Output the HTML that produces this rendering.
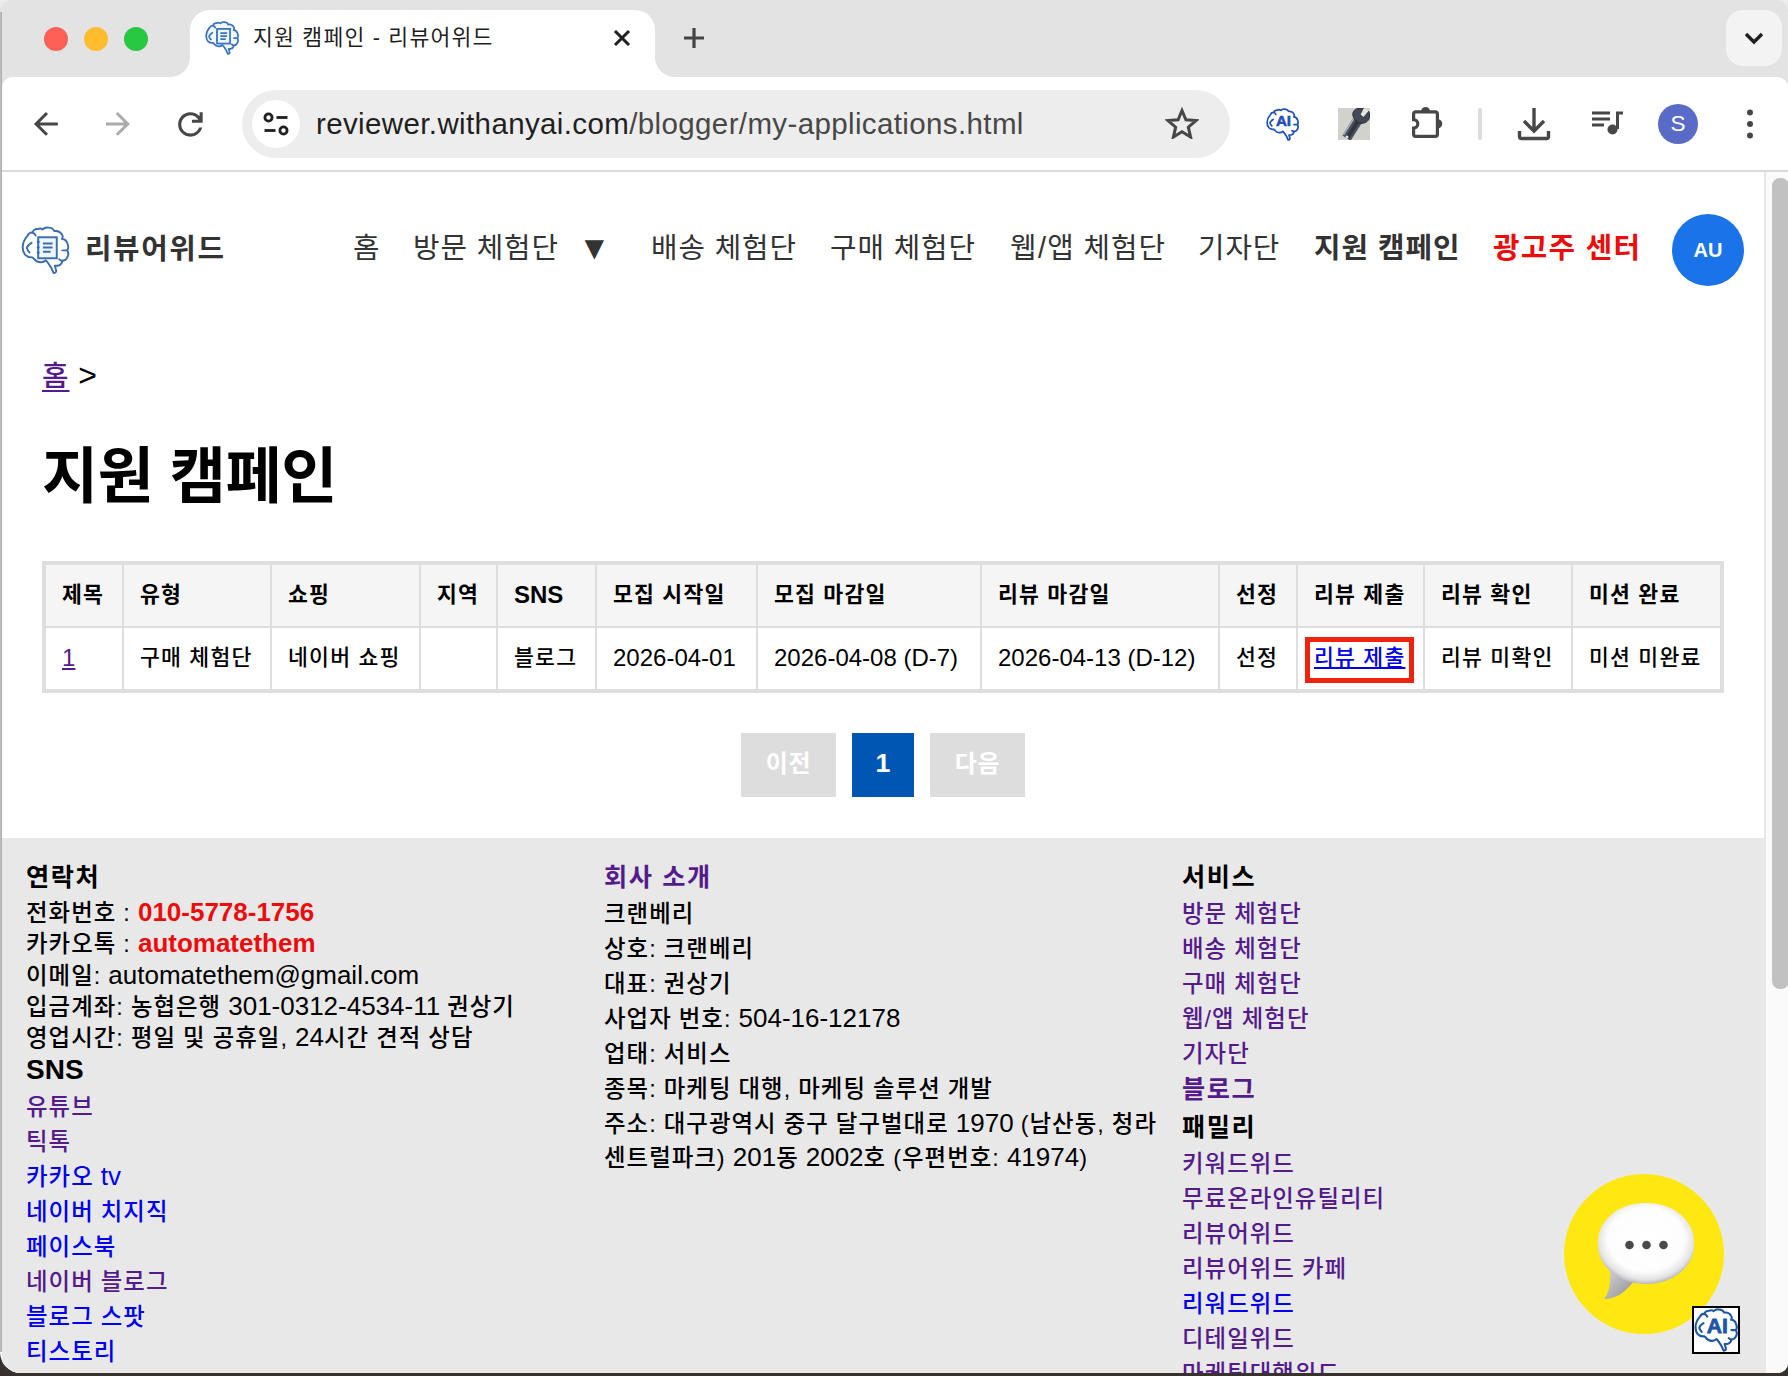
<!DOCTYPE html>
<html lang="ko">
<head>
<meta charset="utf-8">
<title>지원 캠페인 - 리뷰어위드</title>
<style>
*{box-sizing:border-box}
html,body{margin:0;padding:0}
body{width:1788px;height:1376px;overflow:hidden;background:#b2b2b2;position:relative;
 font-family:"Liberation Sans","Noto Sans CJK KR",sans-serif;color:#000}
a{text-decoration:none}
#win{position:absolute;left:0;top:0;width:1788px;height:1373px;background:#fff;overflow:hidden;
 border-radius:11px 11px 10px 21px}
/* ---------- browser chrome ---------- */
#tabbar{position:absolute;left:0;top:0;width:1788px;height:100px;background:#e3e3e3}
.tl{position:absolute;top:27px;width:24px;height:24px;border-radius:50%}
#tab{position:absolute;left:190px;top:10px;width:465px;height:67px;background:#fff;border-radius:20px 20px 0 0}
#tab:before,#tab:after{content:"";position:absolute;bottom:0;width:20px;height:20px}
#tab:before{left:-20px;background:radial-gradient(circle at 0 0,rgba(255,255,255,0) 19.5px,#fff 20.5px)}
#tab:after{right:-20px;background:radial-gradient(circle at 100% 0,rgba(255,255,255,0) 19.5px,#fff 20.5px)}
#tabtitle{position:absolute;left:63px;top:12px;font-size:21.6px;line-height:32px;color:#1f1f1f;white-space:nowrap;letter-spacing:1.2px;font-weight:400}
#toolbar{position:absolute;left:2px;top:77px;width:1786px;height:93px;background:#fff;border-radius:11px 11px 0 0}
#edge{position:absolute;left:0;top:12px;width:2px;height:1340px;background:linear-gradient(90deg,#c6c6c6,#a4a4a4)}
#tbline{position:absolute;left:0;top:170px;width:1788px;height:2px;background:#dadada}
#url{position:absolute;left:242px;top:90px;width:988px;height:68px;border-radius:34px;background:#eeeded}
#urltext{position:absolute;left:74px;top:16px;font-size:29.5px;line-height:36px;color:#474747;white-space:nowrap;letter-spacing:.375px}
.ico{position:absolute}
/* ---------- page ---------- */
#page{position:absolute;left:2px;top:172px;width:1762px;height:1204px;background:#fff;overflow:hidden}
#sbar{position:absolute;left:1764px;top:172px;width:24px;height:1204px;background:#fafafa;border-left:2px solid #e8e8e8}
#thumb{position:absolute;left:6px;top:6px;width:17px;height:811px;border-radius:8px;background:#c1c1c1}

/* page content */
.k{font-size:.9em;letter-spacing:.033em;font-weight:500}
.k .l{font-size:1.1111em;letter-spacing:0;line-height:0}
th.k,h1 .k,#brand .k,#pager .k,#foot h3.k{font-weight:700}
#hdr{position:absolute;left:0;top:0;width:1762px;height:150px}
#logo{position:absolute;left:19.3px;top:54px;width:48.6px;height:48.6px}
#brand{position:absolute;left:83px;top:53px;letter-spacing:.6px;font-size:32px;line-height:46px;font-weight:700;color:#333;white-space:nowrap}
#nav{position:absolute;left:0;top:52px;height:46px;width:1762px;margin:0;padding:0;list-style:none;font-size:32px;line-height:46px;color:#333;white-space:nowrap}
#nav li{position:absolute;top:1px;font-size:28.8px;letter-spacing:.9px;font-weight:400}
#nav b{font-weight:700;letter-spacing:1.3px}
#au{position:absolute;left:1670px;top:42px;width:72px;height:72px;border-radius:50%;background:#1a73e8;color:#fff;font-weight:700;font-size:20px;line-height:72px;text-align:center}
#crumb{position:absolute;left:40px;top:180px;font-size:32px;line-height:46px;white-space:nowrap}
#crumb a{color:#551a8b;text-decoration:underline;text-decoration-thickness:2px;text-underline-offset:4px}
h1{position:absolute;left:40px;top:258px;margin:0;font-size:64px;line-height:92px;font-weight:700;white-space:nowrap}
table{position:absolute;left:40px;top:389px;border-collapse:separate;border-spacing:0;border:3px solid #dedede;table-layout:fixed;width:1682px;font-size:24px;line-height:29px}
th,td{border:1px solid #dedede;padding:15px 14px 17px 16px;text-align:left;white-space:nowrap;height:63px;overflow:visible;vertical-align:middle}
th{background:#f5f5f5;font-weight:700}
td{background:#fff}
th.k,td.k{letter-spacing:1.2px}
td a{color:#551a8b;text-decoration:underline}
td a.sub{color:#0000ee;position:relative}
#hl{position:absolute;left:1303px;top:465px;width:109px;height:46px;border:5px solid #f0230f}
#pager{position:absolute;left:0;top:561px;width:1762px;height:64px}
#pager button{position:absolute;top:0;height:64px;border:0;padding:0 0 4px 0;margin:0;font-family:inherit;font-size:26.67px;font-weight:700;color:#fff;background:#ddd;text-align:center;line-height:32px}
#pager button.on{background:#0056b3}
#foot{position:absolute;left:0;top:666px;width:1762px;height:540px;background:#e8e8e8;font-size:26px;line-height:31px}
#foot a{color:#551a8b}
#foot a.nv{color:#0000ee}
#foot h3{margin:0;font-size:28px;font-weight:700;position:absolute;white-space:nowrap;line-height:36px}
#foot ul{list-style:none;margin:0;padding:0;position:absolute}
#foot li{white-space:nowrap}
.c1 li{height:31.3px}
.c2 li,.c3 li,.c1s li{height:35.05px;line-height:35px}
#foot .red{color:#ec0c0c;font-weight:700}
#foot h3.k{font-size:25.2px;letter-spacing:1.6px}
#foot ul.k{letter-spacing:.045em;word-spacing:-.5px}
</style>
</head>
<body>
<div style="position:absolute;left:0;top:0;width:1788px;height:30px;background:#ececec"></div>
<div style="position:absolute;left:0;top:1340px;width:1788px;height:36px;background:#37322f"></div>
<div id="win">
 <div id="tabbar">
  <div class="tl" style="left:44px;background:#fe5f57"></div>
  <div class="tl" style="left:84px;background:#febc2e"></div>
  <div class="tl" style="left:124px;background:#28c840"></div>
  <div id="tab"><div id="tabtitle">지원 캠페인 - 리뷰어위드</div></div>
 </div>
 <div id="toolbar"></div>
 <div id="url"><div id="urltext"><span style="color:#1f1f1f">reviewer.withanyai.com</span>/blogger/my-applications.html</div></div>

 <!-- favicon -->
 <svg class="ico" style="left:205px;top:21px" width="34" height="34" viewBox="-1 -1 50 50"><path d="M.8 21.6C.5 17 3 12 5.8 8.8C7 6.5 9 5.5 10.9 5.8C11 3.5 13.5 2 16 2.2C18 1.2 20 1.5 21.5 2.5C23 .8 25.5 .4 27 .7C29.5 .5 32 1.5 33.3 4.2C36 3.8 39.5 5 41 7.5C42 9 42 11 41.2 12.4C44 12.5 46 14.5 46.8 17C47.8 19.5 47.8 22.5 46.5 24.1C47.8 26 48 29 46.5 31.5C45.5 33.5 43.5 34.8 41.4 34.8C41.2 37 39.5 39.3 36.8 39.9L33.8 39.9C34.5 42 35 44 35.3 45.5C34.8 47 33.5 47.8 32.5 47.3C31.5 44.5 30 41.5 28.5 39.5C27.3 37.5 26 35.8 24.6 34.3C23 35.8 21 36.5 19 36.3C16.5 36.3 14 35 12.9 33.3C12 32.2 11.2 31.5 10.4 31.2C8 31.5 5 30.5 3.2 28.5C1.5 26.5 .8 24 .8 21.6Z" fill="#f2f8ff" stroke="#3b74bd" stroke-width="2.6" stroke-linejoin="round"/><path d="M10.9 5.8C12 6.2 13.5 7.5 14 8.8M46.5 24.1H41.5M41.4 34.8C40 34.5 39 34 38.4 33.3M9.8 16.3Q5.5 19 5 21.5Q5.5 24 7.8 26.2" fill="none" stroke="#3b74bd" stroke-width="2.6" stroke-linecap="round"/><rect x="16.7" y="10.6" width="19.1" height="21.6" fill="#eef7ff" stroke="#3b74bd" stroke-width="2.6"/><path d="M21.5 17h10M21.5 21.2h10M21.5 25.5h8" stroke="#3b74bd" stroke-width="2.6"/><circle cx="16.7" cy="15.5" r="1.5" fill="#3b74bd"/><circle cx="16.7" cy="21" r="1.5" fill="#3b74bd"/><circle cx="16.7" cy="26.5" r="1.5" fill="#3b74bd"/></svg>
 <!-- tab close / new tab / dropdown -->
 <svg class="ico" style="left:610px;top:26px" width="24" height="24" viewBox="0 0 24 24"><path d="M5 5l14 14M19 5L5 19" stroke="#1f1f1f" stroke-width="3" fill="none"/></svg>
 <svg class="ico" style="left:680px;top:24px" width="28" height="28" viewBox="0 0 28 28"><path d="M14 4v20M4 14h20" stroke="#444" stroke-width="3.200" fill="none"/></svg>
 <div class="ico" style="left:1726px;top:10px;width:56px;height:56px;border-radius:17px;background:#f3f3f3"></div>
 <svg class="ico" style="left:1742px;top:27px" width="24" height="24" viewBox="0 0 24 24"><path d="M4 7l8 8 8-8" stroke="#1f1f1f" stroke-width="3.400" fill="none"/></svg>
 <!-- nav buttons -->
 <svg class="ico" style="left:28.200px;top:106px" width="35.8" height="35.8" viewBox="0 0 24 24"><path d="M7.825 13l5.6 5.600L12 20l-8-8 8-8 1.425 1.4-5.6 5.600H20v2z" fill="#474747"/></svg>
 <svg class="ico" style="left:99.700px;top:106px" width="35.8" height="35.8" viewBox="0 0 24 24"><path d="M16.175 13H4v-2h12.175l-5.6-5.600L12 4l8 8-8 8-1.425-1.400z" fill="#ababab"/></svg>
 <svg class="ico" style="left:171.600px;top:105.600px" width="36.8" height="36.8" viewBox="0 0 24 24"><path d="M12 20q-3.350 0-5.675-2.325T4 12t2.325-5.675T12 4q1.725 0 3.3.712T18 6.750V4h2v7h-7V9h4.200q-.8-1.4-2.187-2.200T12 6Q9.5 6 7.750 7.750T6 12t1.750 4.250T12 18q1.925 0 3.475-1.100T17.650 14h2.100q-.7 2.650-2.850 4.325T12 20" fill="#474747"/></svg>
 <!-- site info -->
 <div class="ico" style="left:252px;top:100px;width:48px;height:48px;border-radius:50%;background:#fff"></div>
 <svg class="ico" style="left:262px;top:110px" width="28" height="28" viewBox="0 0 28 28"><circle cx="6.500" cy="7.500" r="3.600" stroke="#1f1f1f" stroke-width="2.800" fill="none"/><path d="M14.500 7.500h11" stroke="#1f1f1f" stroke-width="2.800"/><circle cx="21.500" cy="20.500" r="3.600" stroke="#1f1f1f" stroke-width="2.800" fill="none"/><path d="M2.500 20.500h11" stroke="#1f1f1f" stroke-width="2.800"/></svg>
 <!-- star -->
 <svg class="ico" style="left:1165px;top:107px" width="34" height="32" viewBox="0 0 34 32"><path d="M17 3.500l3.900 9.300 10 .8-7.600 6.600 2.300 9.800L17 24.800 8.400 30l2.300-9.800-7.600-6.600 10-.8z" stroke="#474747" stroke-width="3" fill="none" stroke-linejoin="miter"/></svg>
 <!-- AI ext -->
 <svg class="ico" style="left:1265.5px;top:107.5px" width="33" height="33" viewBox="-1 -1 50 50"><path d="M.8 21.6C.5 17 3 12 5.8 8.8C7 6.5 9 5.5 10.9 5.8C11 3.5 13.5 2 16 2.2C18 1.2 20 1.5 21.5 2.5C23 .8 25.5 .4 27 .7C29.5 .5 32 1.5 33.3 4.2C36 3.8 39.5 5 41 7.5C42 9 42 11 41.2 12.4C44 12.5 46 14.5 46.8 17C47.8 19.5 47.8 22.5 46.5 24.1C47.8 26 48 29 46.5 31.5C45.5 33.5 43.5 34.8 41.4 34.8C41.2 37 39.5 39.3 36.8 39.9L33.8 39.9C34.5 42 35 44 35.3 45.5C34.8 47 33.5 47.8 32.5 47.3C31.5 44.5 30 41.5 28.5 39.5C27.3 37.5 26 35.8 24.6 34.3C23 35.8 21 36.5 19 36.3C16.5 36.3 14 35 12.9 33.3C12 32.2 11.2 31.5 10.4 31.2C8 31.5 5 30.5 3.2 28.5C1.5 26.5 .8 24 .8 21.6Z" fill="#fff" stroke="#1e50b5" stroke-width="2.6" stroke-linejoin="round"/><path d="M10.9 5.8C12 6.2 13.5 7.5 14 8.8M46.5 24.1H41.5M41.4 34.8C40 34.5 39 34 38.4 33.3M9.8 16.3Q5.5 19 5 21.5Q5.5 24 7.8 26.2" fill="none" stroke="#1e50b5" stroke-width="2.6" stroke-linecap="round"/><text x="25.5" y="27" font-family="Liberation Sans, sans-serif" font-weight="700" font-size="23" fill="#1e50b5" stroke="#1e50b5" stroke-width=".9" text-anchor="middle">AI</text></svg>
 <!-- wrench -->
 <svg class="ico" style="left:1338px;top:108px" width="32" height="32" viewBox="0 0 32 32"><rect width="32" height="32" fill="#d2d2cc"/><path d="M4.3 27.4L12.7 32.7 25.2 12.7 16.8 7.4z" fill="#4a505c"/><path d="M9.5 30L21 11.5" stroke="#30353f" stroke-width="3.5"/><path d="M5.5 27L17.5 8" stroke="#b4bac3" stroke-width="1.4"/><path d="M15.5 9.5C13.5 5 16 1 20 .5L26 0 22.5 6.5 25.5 9 30.5 3C33 7 31.5 12.5 27.5 14.5 23 16.5 18 14.5 15.5 9.5z" fill="#434955" stroke="#262a33" stroke-width="1"/><path d="M26 0L22.5 6.5 25.5 9 30.5 3z" fill="#e3e9e3"/><circle cx="9" cy="29" r="1.5" fill="#dfe2e6"/></svg>
 <!-- puzzle -->
 <svg class="ico" style="left:1409px;top:104px" width="36" height="36" viewBox="0 0 36 36"><path d="M6.6 7.9H26.4a2 2 0 0 1 2 2V30.3a2 2 0 0 1-2 2H6.6a2 2 0 0 1-2-2V24a4.2 4.2 0 0 0 0-8.4V9.9a2 2 0 0 1 2-2z" stroke="#474747" stroke-width="3.2" fill="none"/><path d="M12.1 7.5a4.5 4.5 0 0 1 9 0zM28.8 15.3a4.5 4.5 0 0 1 0 9z" fill="#474747"/></svg>
 <div class="ico" style="left:1478px;top:108px;width:4px;height:32px;border-radius:2px;background:#dcdcdc"></div>
 <!-- download -->
 <svg class="ico" style="left:1517px;top:106px" width="34" height="36" viewBox="0 0 34 36"><path d="M17 2v22M7 15l10 10 10-10" stroke="#474747" stroke-width="3.400" fill="none"/><path d="M2.500 25v5.500a2 2 0 0 0 2 2h25a2 2 0 0 0 2-2V25" stroke="#474747" stroke-width="3.400" fill="none"/></svg>
 <!-- playlist -->
 <svg class="ico" style="left:1591px;top:110px" width="32" height="26" viewBox="0 0 32 26"><path d="M1 3h18M1 9h18M1 15h12" stroke="#474747" stroke-width="3"/><path d="M25 3h7M26.500 2v17" stroke="#474747" stroke-width="3" fill="none"/><circle cx="21.500" cy="19.500" r="5" fill="#474747"/></svg>
 <!-- avatar -->
 <div class="ico" style="left:1658px;top:104px;width:40px;height:40px;border-radius:50%;background:#5a6bc7;color:#fff;font-size:22.5px;line-height:40px;text-align:center">S</div>
 <!-- menu -->
 <svg class="ico" style="left:1744px;top:106px" width="12" height="36" viewBox="0 0 12 36"><circle cx="6" cy="6.500" r="3" fill="#474747"/><circle cx="6" cy="18" r="3" fill="#474747"/><circle cx="6" cy="29.500" r="3" fill="#474747"/></svg>
 <div id="tbline"></div>
 <div id="page">
  <div id="hdr">
   <svg id="logo" width="50" height="50" viewBox="-1 -1 50 50"><path d="M.8 21.6C.5 17 3 12 5.8 8.8C7 6.5 9 5.5 10.9 5.8C11 3.5 13.5 2 16 2.2C18 1.2 20 1.5 21.5 2.5C23 .8 25.5 .4 27 .7C29.5 .5 32 1.5 33.3 4.2C36 3.8 39.5 5 41 7.5C42 9 42 11 41.2 12.4C44 12.5 46 14.5 46.8 17C47.8 19.5 47.8 22.5 46.5 24.1C47.8 26 48 29 46.5 31.5C45.5 33.5 43.5 34.8 41.4 34.8C41.2 37 39.5 39.3 36.8 39.9L33.8 39.9C34.5 42 35 44 35.3 45.5C34.8 47 33.5 47.8 32.5 47.3C31.5 44.5 30 41.5 28.5 39.5C27.3 37.5 26 35.8 24.6 34.3C23 35.8 21 36.5 19 36.3C16.5 36.3 14 35 12.9 33.3C12 32.2 11.2 31.5 10.4 31.2C8 31.5 5 30.5 3.2 28.5C1.5 26.5 .8 24 .8 21.6Z" fill="#fff" stroke="#3a6eae" stroke-width="2" stroke-linejoin="round"/><path d="M10.9 5.8C12 6.2 13.5 7.5 14 8.8M46.5 24.1H41.5M41.4 34.8C40 34.5 39 34 38.4 33.3M9.8 16.3Q5.5 19 5 21.5Q5.5 24 7.8 26.2" fill="none" stroke="#3a6eae" stroke-width="2" stroke-linecap="round"/><rect x="16.7" y="10.6" width="19.1" height="21.6" fill="#eef7ff" stroke="#3a6eae" stroke-width="2"/><path d="M21.5 17h10M21.5 21.2h10M21.5 25.5h8" stroke="#3a6eae" stroke-width="2"/><circle cx="16.7" cy="15.5" r="1.5" fill="#3a6eae"/><circle cx="16.7" cy="21" r="1.5" fill="#3a6eae"/><circle cx="16.7" cy="26.5" r="1.5" fill="#3a6eae"/></svg>
   <div id="brand"><span class="k" style="letter-spacing:1.63px">리뷰어위드</span></div>
   <ul id="nav">
    <li style="left:351px">홈</li>
    <li style="left:411px">방문 체험단</li>
    <li style="left:576px;letter-spacing:0;font-size:33px">▼</li>
    <li style="left:649px">배송 체험단</li>
    <li style="left:828px">구매 체험단</li>
    <li style="left:1008px">웹<span style="margin:0 .5px">/</span>앱 체험단</li>
    <li style="left:1196px">기자단</li>
    <li style="left:1312px"><b style="letter-spacing:1px">지원 캠페인</b></li>
    <li style="left:1491px;color:#ec0c0c"><b>광고주 센터</b></li>
   </ul>
   <div id="au">AU</div>
  </div>
  <div id="crumb"><a href="#" class="k">홈</a> &gt;</div>
  <h1><span class="k" style="font-size:61px;letter-spacing:-.44px">지원 캠페인</span></h1>
  <table>
   <colgroup><col style="width:78px"><col style="width:148px"><col style="width:149px"><col style="width:77px"><col style="width:99px"><col style="width:161px"><col style="width:224px"><col style="width:238px"><col style="width:78px"><col style="width:127px"><col style="width:148px"><col style="width:149px"></colgroup>
   <thead><tr><th class="k">제목</th><th class="k">유형</th><th class="k">쇼핑</th><th class="k">지역</th><th>SNS</th><th class="k">모집 시작일</th><th class="k">모집 마감일</th><th class="k">리뷰 마감일</th><th class="k">선정</th><th class="k">리뷰 제출</th><th class="k">리뷰 확인</th><th class="k">미션 완료</th></tr></thead>
   <tbody><tr><td><a href="#">1</a></td><td class="k">구매 체험단</td><td class="k">네이버 쇼핑</td><td></td><td class="k">블로그</td><td>2026-04-01</td><td>2026-04-08 (D-7)</td><td>2026-04-13 (D-12)</td><td class="k">선정</td><td class="k"><a href="#" class="sub">리뷰 제출</a></td><td class="k">리뷰 미확인</td><td class="k">미션 미완료</td></tr></tbody>
  </table>
  <div id="hl"></div>
  <div id="pager">
   <button style="left:739px;width:95px"><span class="k">이전</span></button>
   <button class="on" style="left:850px;width:62px">1</button>
   <button style="left:928px;width:95px"><span class="k">다음</span></button>
  </div>

  <div id="foot">
   <h3 class="k" style="left:24px;top:21px">연락처</h3>
   <ul class="c1 k" style="left:24px;top:60px">
    <li>전화번호 : <span class="red l">010-5778-1756</span></li>
    <li>카카오톡 : <span class="red l">automatethem</span></li>
    <li>이메일: <span class="l">automatethem@gmail.com</span></li>
    <li>입금계좌: 농협은행 <span class="l">301-0312-4534-11</span> 권상기</li>
    <li>영업시간: 평일 및 공휴일, <span class="l">24</span>시간 견적 상담</li>
   </ul>
   <h3 style="left:24px;top:214px">SNS</h3>
   <ul class="c1s k" style="left:24px;top:252px">
    <li><a href="#">유튜브</a></li>
    <li><a href="#">틱톡</a></li>
    <li><a href="#" class="nv">카카오 <span class="l">tv</span></a></li>
    <li><a href="#" class="nv">네이버 치지직</a></li>
    <li><a href="#" class="nv">페이스북</a></li>
    <li><a href="#">네이버 블로그</a></li>
    <li><a href="#" class="nv">블로그 스팟</a></li>
    <li><a href="#" class="nv">티스토리</a></li>
   </ul>
   <h3 class="k" style="left:602px;top:21px"><a href="#">회사 소개</a></h3>
   <ul class="c2 k" style="left:602px;top:59px;width:560px">
    <li>크랜베리</li>
    <li>상호: 크랜베리</li>
    <li>대표: 권상기</li>
    <li>사업자 번호: <span class="l">504-16-12178</span></li>
    <li>업태: 서비스</li>
    <li>종목: 마케팅 대행, 마케팅 솔루션 개발</li>
    <li>주소: 대구광역시 중구 달구벌대로 <span class="l">1970</span> (남산동, 청라</li>
    <li style="line-height:31px;height:31px;margin-top:1px">센트럴파크) <span class="l">201</span>동 <span class="l">2002</span>호 (우편번호: <span class="l">41974</span>)</li>
   </ul>
   <h3 class="k" style="left:1180px;top:21px">서비스</h3>
   <ul class="c3 k" style="left:1180px;top:58.5px">
    <li><a href="#">방문 체험단</a></li>
    <li><a href="#">배송 체험단</a></li>
    <li><a href="#">구매 체험단</a></li>
    <li><a href="#">웹/앱 체험단</a></li>
    <li><a href="#">기자단</a></li>
   </ul>
   <h3 class="k" style="left:1180px;top:233px"><a href="#">블로그</a></h3>
   <h3 class="k" style="left:1180px;top:271px">패밀리</h3>
   <ul class="c3 k" style="left:1180px;top:309px">
    <li><a href="#">키워드위드</a></li>
    <li><a href="#">무료온라인유틸리티</a></li>
    <li><a href="#">리뷰어위드</a></li>
    <li><a href="#">리뷰어위드 카페</a></li>
    <li><a href="#" class="nv">리워드위드</a></li>
    <li><a href="#">디테일위드</a></li>
    <li><a href="#">마케팅대행위드</a></li>
   </ul>
  </div>
  <div id="kakao" style="position:absolute;left:1562px;top:1002px;width:160px;height:160px;border-radius:50%;background:#ffe812"></div>
  <svg style="position:absolute;left:1586px;top:1024px" width="116" height="110" viewBox="0 0 116 110">
   <radialGradient id="bg1" cx="50%" cy="45%" r="55%"><stop offset="0" stop-color="#fff"/><stop offset=".72" stop-color="#fdfdfd"/><stop offset=".9" stop-color="#e4e4e6"/><stop offset="1" stop-color="#b9b9bd"/></radialGradient>
   <linearGradient id="tg" x1="0" y1="0" x2="1" y2="1"><stop offset="0" stop-color="#d9d9dc"/><stop offset="1" stop-color="#8f8f94"/></linearGradient><path d="M22 72C23 88 21 97 16 103c11 0 21-6 29-17z" fill="url(#tg)"/>
   <rect x="10" y="7" width="96" height="81" rx="46" ry="39" fill="url(#bg1)"/>
   <circle cx="41.5" cy="49" r="4.3" fill="#4a4a4a"/><circle cx="58.5" cy="49" r="4.3" fill="#4a4a4a"/><circle cx="75.5" cy="49" r="4.3" fill="#4a4a4a"/>
  </svg>
  <div style="position:absolute;left:1690px;top:1134px;width:48px;height:48px;border:2px solid #000;background:#fff"></div>
  <svg style="position:absolute;left:1692px;top:1136px" width="44" height="44" viewBox="-1 -1 50 50"><path d="M.8 21.6C.5 17 3 12 5.8 8.8C7 6.5 9 5.5 10.9 5.8C11 3.5 13.5 2 16 2.2C18 1.2 20 1.5 21.5 2.5C23 .8 25.5 .4 27 .7C29.5 .5 32 1.5 33.3 4.2C36 3.8 39.5 5 41 7.5C42 9 42 11 41.2 12.4C44 12.5 46 14.5 46.8 17C47.8 19.5 47.8 22.5 46.5 24.1C47.8 26 48 29 46.5 31.5C45.5 33.5 43.5 34.8 41.4 34.8C41.2 37 39.5 39.3 36.8 39.9L33.8 39.9C34.5 42 35 44 35.3 45.5C34.8 47 33.5 47.8 32.5 47.3C31.5 44.5 30 41.5 28.5 39.5C27.3 37.5 26 35.8 24.6 34.3C23 35.8 21 36.5 19 36.3C16.5 36.3 14 35 12.9 33.3C12 32.2 11.2 31.5 10.4 31.2C8 31.5 5 30.5 3.2 28.5C1.5 26.5 .8 24 .8 21.6Z" fill="#fff" stroke="#1e56a8" stroke-width="2.4" stroke-linejoin="round"/><path d="M10.9 5.8C12 6.2 13.5 7.5 14 8.8M46.5 24.1H41.5M41.4 34.8C40 34.5 39 34 38.4 33.3M9.8 16.3Q5.5 19 5 21.5Q5.5 24 7.8 26.2" fill="none" stroke="#1e56a8" stroke-width="2.4" stroke-linecap="round"/><text x="25.5" y="27" font-family="Liberation Sans, sans-serif" font-weight="700" font-size="24" fill="#1e56a8" stroke="#1e56a8" stroke-width=".9" text-anchor="middle">AI</text></svg>
 </div>
 <div id="edge"></div>
 <div id="sbar"><div id="thumb"></div></div>
</div>
</body>
</html>
